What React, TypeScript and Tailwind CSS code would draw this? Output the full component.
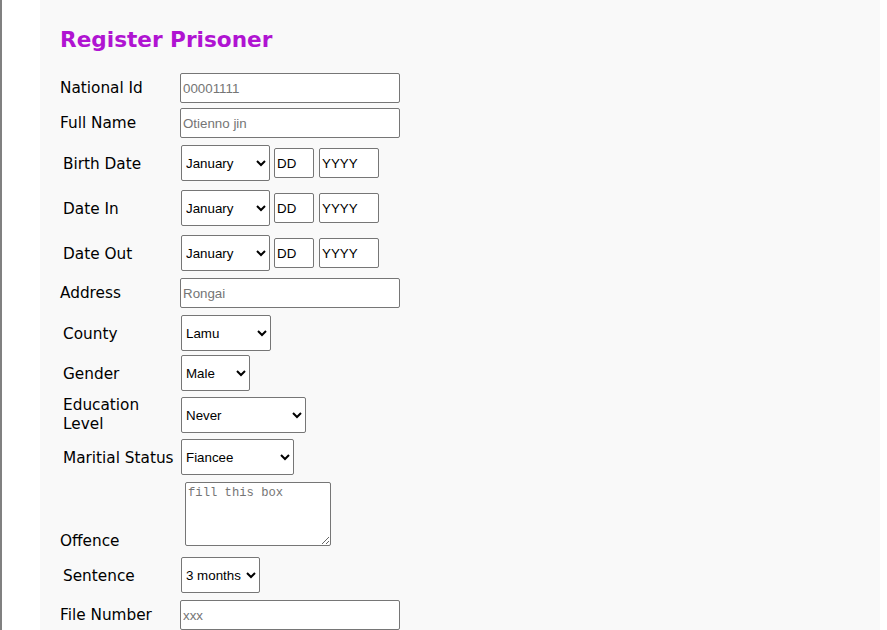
import React from "react";

const months = ["January", "February", "March", "April", "May", "June", "July", "August", "September", "October", "November", "December"];

const inputCls =
  "h-[30px] border border-[#767676] rounded-[2px] bg-white px-[2px] text-[13.33px] text-black placeholder:text-[#757575] font-['Liberation_Sans',Arial,sans-serif] outline-none";
const selectCls =
  "h-[36px] border border-[#767676] rounded-[2px] bg-white px-0 text-[13.33px] text-black font-['Liberation_Sans',Arial,sans-serif] outline-none";

function DateRow({label, top}: {label: string; top: string}) {
  return (
    <div className={`flex items-center ${top}`}>
      <label className="w-[121px] pl-[3px] pt-[2px]">{label}</label>
      <select className={`${selectCls} w-[89px]`} defaultValue="January">
        {months.map(m => (
          <option key={m}>{m}</option>
        ))}
      </select>
      <input className={`${inputCls} w-[40px] ml-[4px]`} defaultValue="DD" />
      <input className={`${inputCls} w-[60px] ml-[5px]`} defaultValue="YYYY" />
    </div>
  );
}

export default function App() {
  return (
    <div className="flex min-h-[630px] bg-white font-['DejaVu_Sans',Verdana,sans-serif] text-[15.3px] text-black">
      <div className="w-[2px] bg-[#808080]" />
      <div className="w-[38px]" />
      <div className="w-[840px] bg-[#f9f9f9] pl-[20px] pt-[24px]">
        <h1 className="text-[21.6px] font-bold leading-[30px] text-[#b014d2] pt-[1px]">Register Prisoner</h1>
        <form className="mt-[18px]">
          <div className="flex items-center">
            <label className="w-[120px]">National Id</label>
            <input className={`${inputCls} w-[220px]`} placeholder="00001111" />
          </div>
          <div className="flex items-center mt-[5px]">
            <label className="w-[120px]">Full Name</label>
            <input className={`${inputCls} w-[220px]`} placeholder="Otienno jin" />
          </div>
          <DateRow label="Birth Date" top="mt-[7px]" />
          <DateRow label="Date In" top="mt-[9px]" />
          <DateRow label="Date Out" top="mt-[9px]" />
          <div className="flex items-center mt-[7px]">
            <label className="w-[120px]">Address</label>
            <input className={`${inputCls} w-[220px]`} placeholder="Rongai" />
          </div>
          <div className="flex items-center mt-[7px]">
            <label className="w-[121px] pl-[3px] pt-[2px]">County</label>
            <select className={`${selectCls} w-[90px]`} defaultValue="Lamu">
              <option>Mombasa</option>
              <option>Lamu</option>
              <option>Nairobi</option>
            </select>
          </div>
          <div className="flex items-center mt-[4px]">
            <label className="w-[121px] pl-[3px] pt-[2px]">Gender</label>
            <select className={`${selectCls} w-[69px]`} defaultValue="Male">
              <option>Male</option>
              <option>Female</option>
            </select>
          </div>
          <div className="flex items-center mt-[5px]">
            <label className="w-[121px] pl-[3px] pr-[20px] leading-[19px]">Education Level</label>
            <select className={`${selectCls} w-[125px]`} defaultValue="Never">
              <option>Never</option>
              <option>Primary</option>
              <option>Secondary</option>
              <option>University</option>
            </select>
          </div>
          <div className="flex items-center mt-[5px]">
            <label className="w-[121px] pl-[3px] pt-[2px]">Maritial Status</label>
            <select className={`${selectCls} w-[113px]`} defaultValue="Fiancee">
              <option>Single</option>
              <option>Fiancee</option>
              <option>Married</option>
            </select>
          </div>
          <div className="flex items-end mt-[7px]">
            <label className="w-[125px] leading-[18px] -mb-[4px]">Offence</label>
            <textarea
              className="w-[146px] h-[64px] border border-[#767676] rounded-[2px] bg-white px-[2px] pt-[3px] text-[12.2px] leading-[15px] placeholder:text-[#757575] font-['Liberation_Mono','Courier_New',monospace] outline-none"
              placeholder="fill this box"
            />
          </div>
          <div className="flex items-center mt-[11px]">
            <label className="w-[121px] pl-[3px] pt-[2px]">Sentence</label>
            <select className={`${selectCls} w-[79px]`} defaultValue="3 months">
              <option>1 month</option>
              <option>3 months</option>
              <option>6 months</option>
            </select>
          </div>
          <div className="flex items-center mt-[7px]">
            <label className="w-[120px]">File Number</label>
            <input className={`${inputCls} w-[220px]`} placeholder="xxx" />
          </div>
        </form>
      </div>
    </div>
  );
}
